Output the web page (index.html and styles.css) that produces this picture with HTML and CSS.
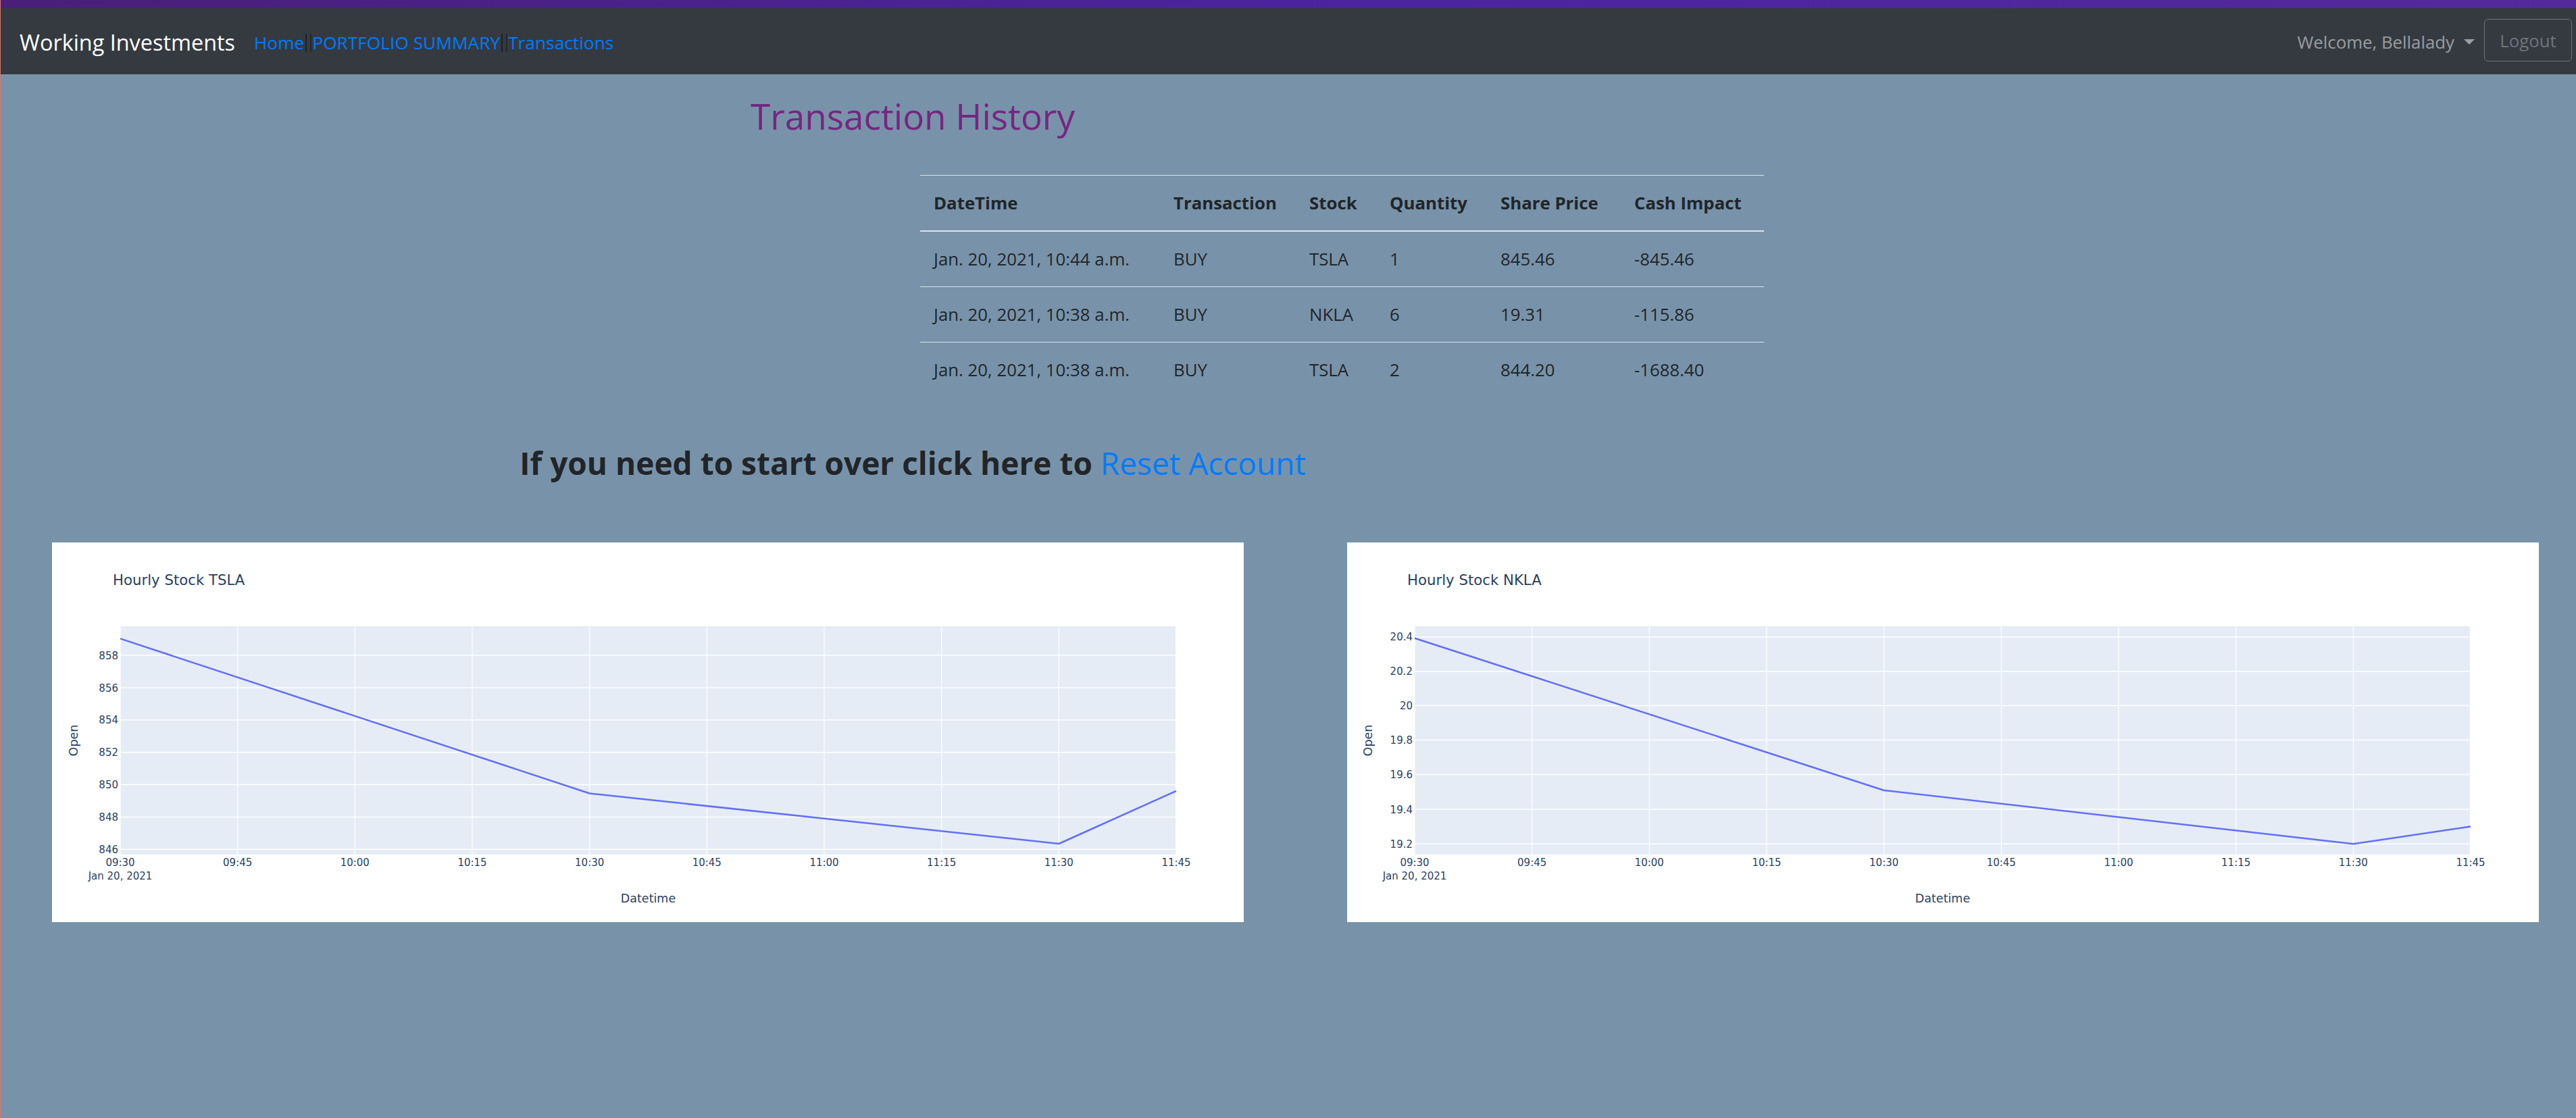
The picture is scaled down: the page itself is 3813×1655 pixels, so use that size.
FILE: index.html
```html
<!DOCTYPE html>
<html lang="en">
<head>
<meta charset="utf-8">
<title>Transaction History</title>
<link rel="stylesheet" href="styles.css">
</head>
<body>
<div class="page">
  <div class="top-stripe"></div>
  <nav class="navbar">
    <a class="brand" href="#">Working Investments</a>
    <ul class="nav-links">
      <li><a href="#">Home</a></li>
      <li class="sep"></li>
      <li><a href="#">PORTFOLIO SUMMARY</a></li>
      <li class="sep"></li>
      <li><a href="#">Transactions</a></li>
    </ul>
    <div class="nav-right">
      <a class="welcome" href="#">Welcome, Bellalady<span class="caret"></span></a>
      <button class="logout" type="button">Logout</button>
    </div>
  </nav>

  <main>
    <div class="center-col">
      <h2 class="page-title">Transaction History</h2>
    </div>

    <div class="table-wrap">
      <table class="tx-table">
        <colgroup>
          <col class="c-date"><col class="c-type"><col class="c-stock"><col class="c-qty"><col class="c-price"><col class="c-cash">
        </colgroup>
        <thead>
          <tr><th>DateTime</th><th>Transaction</th><th>Stock</th><th>Quantity</th><th>Share Price</th><th>Cash Impact</th></tr>
        </thead>
        <tbody>
          <tr><td>Jan. 20, 2021, 10:44 a.m.</td><td>BUY</td><td>TSLA</td><td>1</td><td>845.46</td><td>-845.46</td></tr>
          <tr><td>Jan. 20, 2021, 10:38 a.m.</td><td>BUY</td><td>NKLA</td><td>6</td><td>19.31</td><td>-115.86</td></tr>
          <tr><td>Jan. 20, 2021, 10:38 a.m.</td><td>BUY</td><td>TSLA</td><td>2</td><td>844.20</td><td>-1688.40</td></tr>
        </tbody>
      </table>
    </div>

    <div class="center-col">
      <h3 class="reset">If you need to start over click here to <a href="#">Reset Account</a></h3>
    </div>

    <div class="charts">
      <div class="chart">
        <svg class="chart-svg" width="1764" height="562" viewBox="0 0 1764 562">
          <rect class="plot-bg" x="101" y="124" width="1563" height="338"/>
          <g class="grid-v">
            <line x1="101" y1="124" x2="101" y2="462"/>
            <line x1="274.7" y1="124" x2="274.7" y2="462"/>
            <line x1="448.3" y1="124" x2="448.3" y2="462"/>
            <line x1="622" y1="124" x2="622" y2="462"/>
            <line x1="795.7" y1="124" x2="795.7" y2="462"/>
            <line x1="969.3" y1="124" x2="969.3" y2="462"/>
            <line x1="1143" y1="124" x2="1143" y2="462"/>
            <line x1="1316.7" y1="124" x2="1316.7" y2="462"/>
            <line x1="1490.3" y1="124" x2="1490.3" y2="462"/>
            <line x1="1663.5" y1="124" x2="1663.5" y2="462"/>
          </g>
          <g class="grid-h">
            <line x1="101" y1="167" x2="1664" y2="167"/>
            <line x1="101" y1="215" x2="1664" y2="215"/>
            <line x1="101" y1="262.8" x2="1664" y2="262.8"/>
            <line x1="101" y1="310.7" x2="1664" y2="310.7"/>
            <line x1="101" y1="358.6" x2="1664" y2="358.6"/>
            <line x1="101" y1="406.4" x2="1664" y2="406.4"/>
            <line x1="101" y1="454.3" x2="1664" y2="454.3"/>
          </g>
          <polyline class="trace" points="101,142.4 795.7,371.5 1490.3,446 1664,367.8"/>
          <g class="ytick">
            <text x="98" y="172.5">858</text>
            <text x="98" y="220.5">856</text>
            <text x="98" y="268.3">854</text>
            <text x="98" y="316.2">852</text>
            <text x="98" y="364.1">850</text>
            <text x="98" y="411.9">848</text>
            <text x="98" y="459.8">846</text>
          </g>
          <g class="xtick">
            <text x="101" y="479">09:30</text>
            <text x="101" y="499">Jan 20, 2021</text>
            <text x="274.7" y="479">09:45</text>
            <text x="448.3" y="479">10:00</text>
            <text x="622" y="479">10:15</text>
            <text x="795.7" y="479">10:30</text>
            <text x="969.3" y="479">10:45</text>
            <text x="1143" y="479">11:00</text>
            <text x="1316.7" y="479">11:15</text>
            <text x="1490.3" y="479">11:30</text>
            <text x="1664" y="479">11:45</text>
          </g>
          <text class="axis-title" x="882.5" y="533">Datetime</text>
          <text class="axis-title" transform="translate(38 293) rotate(-90)">Open</text>
          <text class="chart-title" x="90" y="63">Hourly Stock TSLA</text>
        </svg>
      </div>

      <div class="chart">
        <svg class="chart-svg" width="1764" height="562" viewBox="0 0 1764 562">
          <rect class="plot-bg" x="100" y="124" width="1563" height="338"/>
          <g class="grid-v">
            <line x1="100" y1="124" x2="100" y2="462"/>
            <line x1="273.7" y1="124" x2="273.7" y2="462"/>
            <line x1="447.3" y1="124" x2="447.3" y2="462"/>
            <line x1="621" y1="124" x2="621" y2="462"/>
            <line x1="794.7" y1="124" x2="794.7" y2="462"/>
            <line x1="968.3" y1="124" x2="968.3" y2="462"/>
            <line x1="1142" y1="124" x2="1142" y2="462"/>
            <line x1="1315.7" y1="124" x2="1315.7" y2="462"/>
            <line x1="1489.3" y1="124" x2="1489.3" y2="462"/>
            <line x1="1662.5" y1="124" x2="1662.5" y2="462"/>
          </g>
          <g class="grid-h">
            <line x1="100" y1="139.9" x2="1663" y2="139.9"/>
            <line x1="100" y1="190.8" x2="1663" y2="190.8"/>
            <line x1="100" y1="241.6" x2="1663" y2="241.6"/>
            <line x1="100" y1="292.5" x2="1663" y2="292.5"/>
            <line x1="100" y1="343.4" x2="1663" y2="343.4"/>
            <line x1="100" y1="395" x2="1663" y2="395"/>
            <line x1="100" y1="446.3" x2="1663" y2="446.3"/>
          </g>
          <polyline class="trace" points="100,141.7 794.7,367 1489.3,446.3 1663,420.5"/>
          <g class="ytick">
            <text x="97" y="145.4">20.4</text>
            <text x="97" y="196.3">20.2</text>
            <text x="97" y="247.1">20</text>
            <text x="97" y="298">19.8</text>
            <text x="97" y="348.9">19.6</text>
            <text x="97" y="400.5">19.4</text>
            <text x="97" y="451.8">19.2</text>
          </g>
          <g class="xtick">
            <text x="100" y="479">09:30</text>
            <text x="100" y="499">Jan 20, 2021</text>
            <text x="273.7" y="479">09:45</text>
            <text x="447.3" y="479">10:00</text>
            <text x="621" y="479">10:15</text>
            <text x="794.7" y="479">10:30</text>
            <text x="968.3" y="479">10:45</text>
            <text x="1142" y="479">11:00</text>
            <text x="1315.7" y="479">11:15</text>
            <text x="1489.3" y="479">11:30</text>
            <text x="1663" y="479">11:45</text>
          </g>
          <text class="axis-title" x="881.5" y="533">Datetime</text>
          <text class="axis-title" transform="translate(37 293) rotate(-90)">Open</text>
          <text class="chart-title" x="89" y="63">Hourly Stock NKLA</text>
        </svg>
      </div>
    </div>
  </main>
</div>
</body>
</html>
```

FILE: styles.css
```css
html, body {
  margin: 0;
  padding: 0;
  background: #7893a9;
}

body {
  font-family: "Open Sans", "Noto Sans", "Liberation Sans", sans-serif;
  color: #212529;
}

.page {
  min-height: 1655px;
  border-left: 1px solid #d27a6c;
  box-sizing: border-box;
}

.top-stripe {
  height: 12px;
  background: linear-gradient(90deg, #4a1f78 0%, #4b24a0 55%, #54299a 100%);
}

/* ---------- navbar ---------- */
.navbar {
  display: flex;
  align-items: center;
  height: 98px;
  background: #343a40;
  padding: 0 6px 0 28px;
  box-sizing: border-box;
}

.brand {
  font-size: 32.4px;
  line-height: 48px;
  color: #ffffff;
  text-decoration: none;
  margin-right: 28px;
  margin-top: 2px;
}

.nav-links {
  display: flex;
  align-items: center;
  list-style: none;
  margin: 4px 0 0 0;
  padding: 0;
}

.nav-links a {
  display: block;
  color: #007bff;
  font-size: 26.3px;
  line-height: 38px;
  text-decoration: none;
}

.nav-links .sep {
  width: 5px;
  height: 27px;
  border-left: 2px solid #1e2125;
  border-right: 2px solid #24272c;
  margin: 0 1px 0 2px;
}

.nav-right {
  margin-left: auto;
  display: flex;
  align-items: center;
}

.welcome {
  display: flex;
  align-items: center;
  color: rgba(255, 255, 255, 0.5);
  font-size: 25.8px;
  line-height: 38px;
  text-decoration: none;
  margin-top: 2px;
}

.caret {
  width: 0;
  height: 0;
  margin-left: 14px;
  border-top: 8px solid rgba(255, 255, 255, 0.5);
  border-left: 8px solid transparent;
  border-right: 8px solid transparent;
}

.logout {
  margin-left: 14px;
  margin-bottom: 3px;
  height: 63px;
  width: 130px;
  padding: 0;
  background: transparent;
  border: 1.5px solid #6c757d;
  border-radius: 6px;
  color: #6c757d;
  font-family: "Open Sans", "Noto Sans", sans-serif;
  font-size: 25.8px;
}

/* ---------- main ---------- */
.center-col {
  width: 2700px;
  text-align: center;
}

.page-title {
  margin: 30px 0 0 0;
  font-size: 53px;
  line-height: 64px;
  font-weight: 400;
  color: #772582;
}

.table-wrap {
  margin-top: 55px;
  padding-left: 1361px;
}

.tx-table {
  border-collapse: collapse;
  table-layout: fixed;
  width: 1249px;
  font-size: 25.8px;
  color: #212529;
}

.c-date { width: 355px; }
.c-type { width: 201px; }
.c-stock { width: 119px; }
.c-qty { width: 164px; }
.c-price { width: 198px; }
.c-cash { width: 212px; }

.tx-table th,
.tx-table td {
  padding: 20px;
  line-height: 41px;
  text-align: left;
  vertical-align: top;
  border-top: 1px solid #dee2e6;
  white-space: nowrap;
}

.tx-table thead th {
  font-weight: 700;
  border-bottom: 2px solid #dee2e6;
}

.reset {
  margin: 70px 0 0 0;
  font-size: 46px;
  line-height: 54px;
  font-weight: 700;
  color: #212529;
}

.reset a {
  font-weight: 400;
  color: #007bff;
  text-decoration: none;
}

/* ---------- charts ---------- */
.charts {
  display: flex;
  gap: 153px;
  padding-left: 76px;
  margin-top: 91px;
}

.chart {
  width: 1764px;
  height: 562px;
  background: #ffffff;
  flex: none;
}

.chart-svg {
  display: block;
}

.plot-bg {
  fill: #e5ecf6;
}

.grid-v line {
  stroke: #ffffff;
  stroke-width: 1.2;
}

.grid-h line {
  stroke: #ffffff;
  stroke-width: 1.5;
}

.trace {
  fill: none;
  stroke: #636efa;
  stroke-width: 2.5;
  stroke-linejoin: round;
}

.chart-svg text {
  font-family: "DejaVu Sans", Verdana, sans-serif;
  fill: #2a3f5f;
}

.ytick text {
  font-size: 15px;
  text-anchor: end;
}

.xtick text {
  font-size: 15px;
  text-anchor: middle;
}

.axis-title {
  font-size: 17.5px;
  text-anchor: middle;
}

.chart-title {
  font-size: 21.25px;
}
```
